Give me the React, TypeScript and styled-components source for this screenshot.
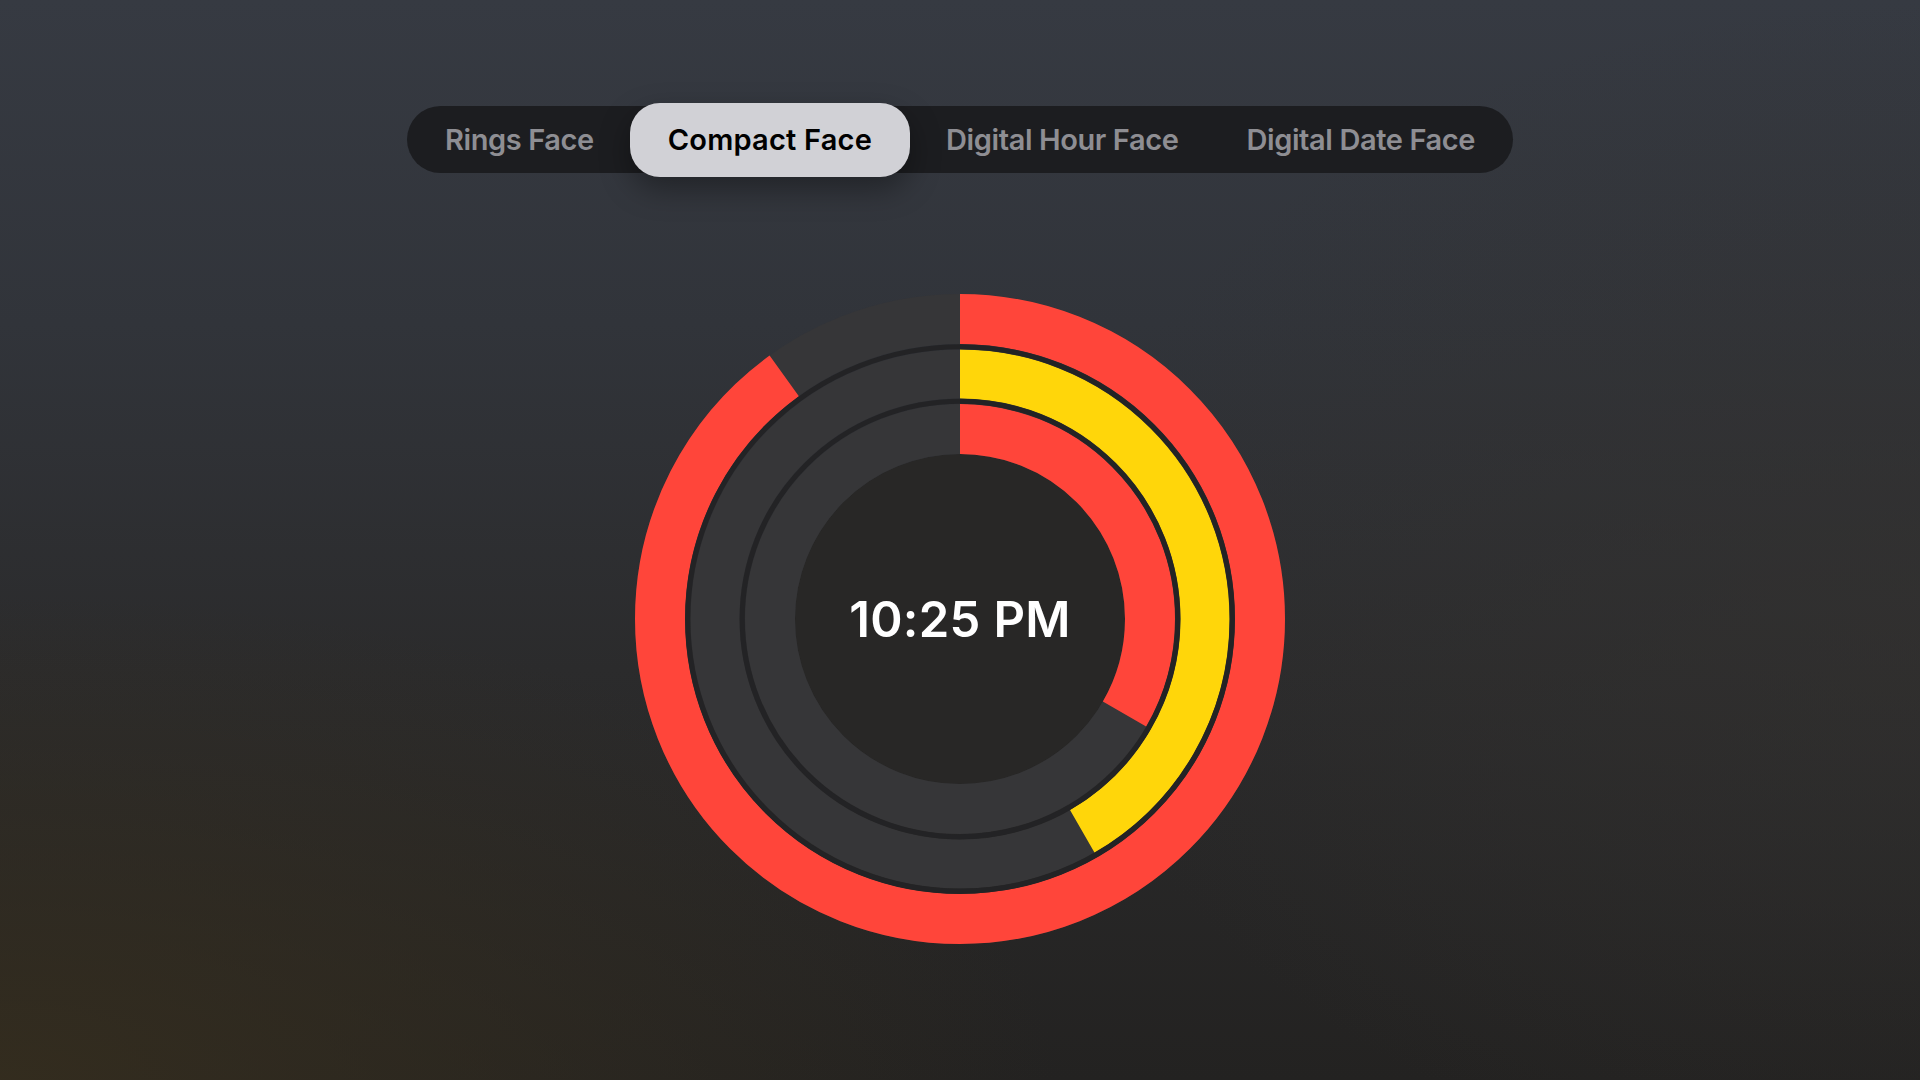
import React from 'react';
import styled, { createGlobalStyle } from 'styled-components';

const GlobalStyle = createGlobalStyle`
  html, body {
    margin: 0;
    padding: 0;
  }

  body {
    font-family: Inter, "Noto Sans", "Liberation Sans", sans-serif;
    -webkit-font-smoothing: antialiased;
  }
`;

const Page = styled.div`
  min-height: 100vh;
  box-sizing: border-box;
  padding-top: 106px;
  display: flex;
  flex-direction: column;
  align-items: center;
  background:
    radial-gradient(ellipse 55% 45% at 0% 100%, rgba(54, 46, 30, 0.85), transparent),
    radial-gradient(ellipse 45% 55% at 100% 55%, rgba(52, 50, 48, 0.6), transparent),
    linear-gradient(180deg, #363a42 0%, #31343a 30%, #2b2b2c 62%, #232221 100%);
`;

const TabBar = styled.div`
  display: flex;
  align-items: center;
  gap: 4px;
  height: 67px;
  padding: 0 6px;
  border-radius: 34px;
  background: #1c1d20;
`;

const Tab = styled.button<{ $active?: boolean }>`
  height: 74px;
  padding: 0 ${(p) => (p.$active ? 38 : 32)}px;
  border: none;
  border-radius: 30px;
  font-family: inherit;
  font-size: 29px;
  font-weight: 600;
  letter-spacing: ${(p) => (p.$active ? '0.2px' : '-0.4px')};
  cursor: pointer;
  color: ${(p) => (p.$active ? '#000' : '#8e8e93')};
  background: ${(p) => (p.$active ? '#d1d1d6' : 'transparent')};
  box-shadow: ${(p) => (p.$active ? '0 12px 30px rgba(0, 0, 0, 0.35)' : 'none')};
`;

const Face = styled.div`
  margin-top: 121px;
  display: grid;
  place-items: center;
  width: 650px;
  height: 650px;

  & > * {
    grid-area: 1 / 1;
  }
`;

const TimeLabel = styled.div`
  color: #fff;
  font-size: 49px;
  font-weight: 600;
  letter-spacing: 0.3px;
`;

interface Ring {
  r: number;
  width: number;
  color: string;
  progress: number;
}

const rings: Ring[] = [
  { r: 300, width: 50, color: '#ff453a', progress: 0.9 },
  { r: 245, width: 49, color: '#ffd60a', progress: 150 / 360 },
  { r: 190, width: 50, color: '#ff453a', progress: 1 / 3 },
];

const tabs = ['Rings Face', 'Compact Face', 'Digital Hour Face', 'Digital Date Face'];

const RingsGraphic: React.FC = () => {
  const c = 325;
  return (
    <svg width="650" height="650" viewBox="0 0 650 650">
      <circle cx={c} cy={c} r={165} fill="#282726" />
      {rings.map((ring, i) => (
        <circle
          key={`t${i}`}
          cx={c}
          cy={c}
          r={ring.r}
          fill="none"
          stroke="#363638"
          strokeWidth={ring.width}
        />
      ))}
      {rings.map((ring, i) => {
        const len = 2 * Math.PI * ring.r;
        return (
          <circle
            key={`p${i}`}
            cx={c}
            cy={c}
            r={ring.r}
            fill="none"
            stroke={ring.color}
            strokeWidth={ring.width}
            strokeDasharray={`${ring.progress * len} ${len}`}
            transform={`rotate(-90 ${c} ${c})`}
          />
        );
      })}
      {/* thin dark seams between the rings */}
      <circle cx={c} cy={c} r={272.3} fill="none" stroke="#232325" strokeWidth={5} />
      <circle cx={c} cy={c} r={217.8} fill="none" stroke="#232325" strokeWidth={5} />
    </svg>
  );
};

const App: React.FC = () => {
  return (
    <>
      <GlobalStyle />
      <Page>
        <TabBar>
          {tabs.map((t) => (
            <Tab key={t} $active={t === 'Compact Face'}>
              {t}
            </Tab>
          ))}
        </TabBar>
        <Face>
          <RingsGraphic />
          <TimeLabel>10:25 PM</TimeLabel>
        </Face>
      </Page>
    </>
  );
};

export default App;
